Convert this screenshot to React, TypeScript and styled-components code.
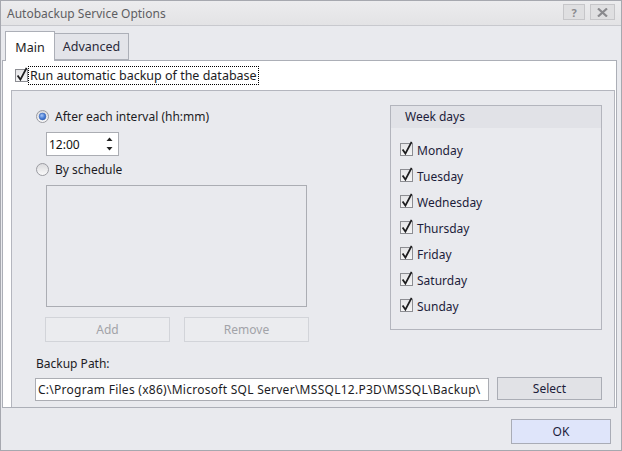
import React from "react";
import styled, { createGlobalStyle } from "styled-components";

const GlobalStyle = createGlobalStyle`
  html, body {
    margin: 0;
    padding: 0;
    background: #ffffff;
  }
`;

const days = [
  "Monday",
  "Tuesday",
  "Wednesday",
  "Thursday",
  "Friday",
  "Saturday",
  "Sunday",
];

const CheckIcon = () => (
  <svg width="14" height="14" viewBox="0 0 14 14" style={{ overflow: "visible" }}>
    <defs>
      <linearGradient id="cbg" x1="0" y1="0" x2="0" y2="1">
        <stop offset="0" stopColor="#e4e4e6" />
        <stop offset="1" stopColor="#f6f6f7" />
      </linearGradient>
    </defs>
    <rect x="0.5" y="0.5" width="12" height="12" fill="url(#cbg)" stroke="#8c8d92" />
    <path
      d="M2.6 6.6 L5.4 10.6 L11.6 -1.2"
      fill="none"
      stroke="#1d1d1f"
      strokeWidth="1.8"
      strokeLinejoin="miter"
    />
  </svg>
);

const RadioIcon = ({ checked }: { checked?: boolean }) => (
  <svg width="13" height="13" viewBox="0 0 13 13">
    <defs>
      <linearGradient id="rbg" x1="0" y1="0" x2="0" y2="1">
        <stop offset="0" stopColor="#d9d9dc" />
        <stop offset="1" stopColor="#fbfbfb" />
      </linearGradient>
      <radialGradient id="rdot" cx="0.4" cy="0.35" r="0.7">
        <stop offset="0" stopColor="#a9c6f5" />
        <stop offset="0.6" stopColor="#4b7fd6" />
        <stop offset="1" stopColor="#2a5bb5" />
      </radialGradient>
    </defs>
    <circle cx="6.5" cy="6.5" r="6" fill="url(#rbg)" stroke="#9a9ba1" />
    {checked && <circle cx="6.5" cy="6.5" r="3.4" fill="url(#rdot)" stroke="#3c68b8" strokeWidth="0.6" />}
  </svg>
);

const App = () => {
  return (
    <>
      <GlobalStyle />
      <Window>
        <TitleBar>
          <TitleText>Autobackup Service Options</TitleText>
          <TitleButtons>
            <TitleButton>?</TitleButton>
            <TitleButton wide>
              <svg width="11" height="9" viewBox="0 0 11 9">
                <path d="M1 0.5 L10 8.5 M10 0.5 L1 8.5" stroke="#8a8a8e" strokeWidth="2.2" />
              </svg>
            </TitleButton>
          </TitleButtons>
        </TitleBar>
        <Client>
          <TabStrip>
            <Tab active>Main</Tab>
            <Tab>Advanced</Tab>
          </TabStrip>
          <TabPage>
            <CheckRow>
              <CheckIcon />
              <FocusLabel>Run automatic backup of the database</FocusLabel>
            </CheckRow>
            <Panel>
              <TopRow>
                <LeftCol>
                  <RadioRow>
                    <RadioIcon checked />
                    <span>After each interval (hh:mm)</span>
                  </RadioRow>
                  <SpinBox>
                    <span>12:00</span>
                    <svg width="7" height="14" viewBox="0 0 7 14">
                      <path d="M3.5 0.5 L6.5 4 L0.5 4 Z" fill="#222" />
                      <path d="M0.5 10 L6.5 10 L3.5 13.5 Z" fill="#222" />
                    </svg>
                  </SpinBox>
                  <RadioRow second>
                    <RadioIcon />
                    <span>By schedule</span>
                  </RadioRow>
                  <ScheduleList />
                  <ButtonRow>
                    <DisabledButton>Add</DisabledButton>
                    <DisabledButton>Remove</DisabledButton>
                  </ButtonRow>
                </LeftCol>
                <WeekGroup>
                  <GroupHeader>Week days</GroupHeader>
                  <DayList>
                    {days.map((d) => (
                      <DayRow key={d}>
                        <CheckIcon />
                        <span>{d}</span>
                      </DayRow>
                    ))}
                  </DayList>
                </WeekGroup>
              </TopRow>
              <PathLabel>Backup Path:</PathLabel>
              <PathRow>
                <PathInput>
                  C:\Program Files (x86)\Microsoft SQL Server\MSSQL12.P3D\MSSQL\Backup\
                </PathInput>
                <SelectButton>Select</SelectButton>
              </PathRow>
            </Panel>
          </TabPage>
          <Footer>
            <OkButton>OK</OkButton>
          </Footer>
        </Client>
      </Window>
    </>
  );
};

export default App;

const Window = styled.div`
  width: 622px;
  height: 451px;
  box-sizing: border-box;
  border: 1px solid #a6a8af;
  background: #e9eaee;
  display: flex;
  flex-direction: column;
  font-family: "Noto Sans", "Open Sans", sans-serif;
  font-size: 12px;
  color: #1c1c24;
`;

const TitleBar = styled.div`
  height: 24px;
  flex: none;
  display: flex;
  align-items: center;
  justify-content: space-between;
  padding-left: 6px;
  border-bottom: 1px solid #c8c9ce;
  background: linear-gradient(#ececee, #e3e3e5);
`;

const TitleText = styled.span`
  color: #5e5e62;
  font-size: 12px;
`;

const TitleButtons = styled.div`
  display: flex;
  gap: 5px;
  margin-right: 6px;
  align-self: flex-start;
  margin-top: 3px;
`;

const TitleButton = styled.div<{ wide?: boolean }>`
  width: ${(p) => (p.wide ? 25 : 22)}px;
  height: 16px;
  box-sizing: border-box;
  border: 1px solid #c6c6c9;
  background: #dfdfe1;
  display: flex;
  align-items: center;
  justify-content: center;
  color: #8a8a8e;
  font-weight: 700;
  font-size: 11px;
`;

const Client = styled.div`
  flex: 1;
  display: flex;
  flex-direction: column;
  padding: 0 4px 0 1px;
`;

const TabStrip = styled.div`
  height: 34px;
  display: flex;
  align-items: flex-end;
  padding-left: 3px;
  position: relative;
  z-index: 1;
`;

const Tab = styled.div<{ active?: boolean }>`
  box-sizing: border-box;
  width: ${(p) => (p.active ? 50 : 75)}px;
  height: ${(p) => (p.active ? 30 : 27)}px;
  margin-left: ${(p) => (p.active ? 0 : -1)}px;
  margin-bottom: ${(p) => (p.active ? -1 : 0)}px;
  border: 1px solid #acafb7;
  border-bottom: ${(p) => (p.active ? "none" : "1px solid #acafb7")};
  background: ${(p) => (p.active ? "#ffffff" : "#e3e4e9")};
  display: flex;
  align-items: center;
  justify-content: center;
  padding-top: ${(p) => (p.active ? 2 : 0)}px;
  font-size: 12.5px;
  color: ${(p) => (p.active ? "#1c1c24" : "#2a2a3a")};
`;

const TabPage = styled.div`
  height: 348px;
  box-sizing: border-box;
  background: #ffffff;
  border: 1px solid #acafb7;
  padding: 0 1px 0 8px;
  display: flex;
  flex-direction: column;
`;

const CheckRow = styled.div`
  height: 29px;
  flex: none;
  display: flex;
  align-items: center;
  margin-left: 4px;
`;

const FocusLabel = styled.span`
  height: 19px;
  box-sizing: border-box;
  border: 1px dotted #000000;
  padding: 0 1px;
  margin-left: -1px;
  display: flex;
  align-items: center;
  font-size: 12.5px;
`;

const Panel = styled.div`
  flex: 1;
  box-sizing: border-box;
  border: 1px solid #b4b6be;
  border-bottom: none;
  background: #e9eaee;
  padding: 14px 10px 0 24px;
  display: flex;
  flex-direction: column;
`;

const TopRow = styled.div`
  height: 237px;
  margin-right: 2px;
  display: flex;
  justify-content: space-between;
`;

const LeftCol = styled.div`
  display: flex;
  flex-direction: column;
`;

const RadioRow = styled.div<{ second?: boolean }>`
  height: 22px;
  margin-top: ${(p) => (p.second ? 2 : 0)}px;
  display: flex;
  align-items: center;
  gap: 6px;
`;

const SpinBox = styled.div`
  width: 73px;
  height: 24px;
  box-sizing: border-box;
  margin: 5px 0 0 10px;
  border: 1px solid #abadb3;
  background: #ffffff;
  display: flex;
  align-items: center;
  justify-content: space-between;
  padding: 0 5px 0 2px;
  color: #111;
`;

const ScheduleList = styled.div`
  width: 261px;
  height: 122px;
  box-sizing: border-box;
  margin: 5px 0 0 10px;
  border: 1px solid #abadb3;
`;

const ButtonRow = styled.div`
  display: flex;
  gap: 14px;
  margin: 10px 0 0 9px;
`;

const DisabledButton = styled.div`
  width: 125px;
  height: 25px;
  box-sizing: border-box;
  border: 1px solid #d2d4d9;
  background: #ebecef;
  color: #a2a3a8;
  display: flex;
  align-items: center;
  justify-content: center;
`;

const WeekGroup = styled.div`
  width: 212px;
  height: 225px;
  box-sizing: border-box;
  border: 1px solid #b3b5bd;
`;

const GroupHeader = styled.div`
  height: 22px;
  line-height: 22px;
  padding-left: 14px;
  background: #e1e2e7;
  color: #1c1c3a;
`;

const DayList = styled.div`
  padding: 9px 0 0 9px;
  display: flex;
  flex-direction: column;
`;

const DayRow = styled.div`
  height: 26px;
  display: flex;
  align-items: center;
  gap: 3px;
  color: #1c1c3a;
`;

const PathLabel = styled.div`
  height: 16px;
  line-height: 16px;
  margin-top: 14px;
`;

const PathRow = styled.div`
  display: flex;
  align-items: flex-start;
  margin: 5px 0 0 -1px;
`;

const PathInput = styled.div`
  width: 454px;
  height: 23px;
  box-sizing: border-box;
  margin-top: 1px;
  border: 1px solid #abadb3;
  background: #ffffff;
  padding-left: 2px;
  display: flex;
  align-items: center;
  white-space: nowrap;
  overflow: hidden;
  letter-spacing: 0.27px;
`;

const SelectButton = styled.div`
  width: 105px;
  height: 23px;
  box-sizing: border-box;
  margin-left: 8px;
  border: 1px solid #aaadb5;
  background: #e1e2e6;
  display: flex;
  align-items: center;
  justify-content: center;
  color: #1c1c3a;
`;

const Footer = styled.div`
  flex: 1;
  display: flex;
  justify-content: flex-end;
  padding: 11px 6px 0 0;
`;

const OkButton = styled.div`
  width: 100px;
  height: 25px;
  box-sizing: border-box;
  border: 1px solid #a9acb6;
  background: #dfe5fa;
  display: flex;
  align-items: center;
  justify-content: center;
  color: #1c1c3a;
`;
